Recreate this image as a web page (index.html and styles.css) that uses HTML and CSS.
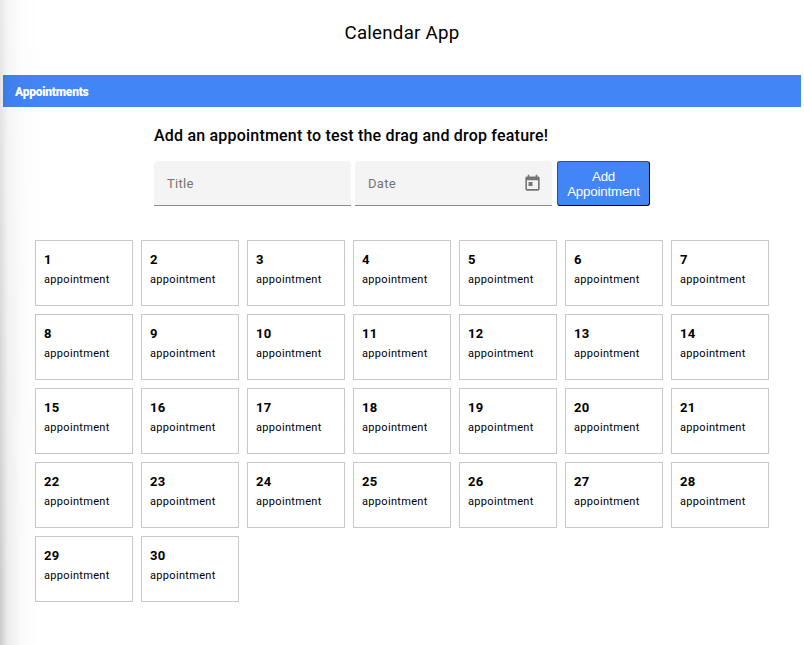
FILE: index.html
```html
<!DOCTYPE html>
<html lang="en">
<head>
<meta charset="utf-8">
<title>Calendar App</title>
<link rel="stylesheet" href="styles.css">
</head>
<body>
<header class="header"><h1>Calendar App</h1></header>
<nav class="toolbar">Appointments</nav>
<main>
<section class="add">
<h2>Add an appointment to test the drag and drop feature!</h2>
<form class="form">
<div class="field"><span>Title</span></div>
<div class="field"><span>Date</span>
<svg class="icon" viewBox="0 0 24 24" fill="currentColor"><path d="M19 3h-1V1h-2v2H8V1H6v2H5c-1.11 0-1.99.9-1.99 2L3 19c0 1.100.89 2 2 2h14c1.100 0 2-.9 2-2V5c0-1.100-.9-2-2-2zm0 16H5V8h14v11zM7 10h5v5H7z"/></svg></div>
<button class="submit" type="button">Add Appointment</button>
</form>
</section>
<section class="calendar">
<article class="day"><b>1</b><p>appointment</p></article>
<article class="day"><b>2</b><p>appointment</p></article>
<article class="day"><b>3</b><p>appointment</p></article>
<article class="day"><b>4</b><p>appointment</p></article>
<article class="day"><b>5</b><p>appointment</p></article>
<article class="day"><b>6</b><p>appointment</p></article>
<article class="day"><b>7</b><p>appointment</p></article>
<article class="day"><b>8</b><p>appointment</p></article>
<article class="day"><b>9</b><p>appointment</p></article>
<article class="day"><b>10</b><p>appointment</p></article>
<article class="day"><b>11</b><p>appointment</p></article>
<article class="day"><b>12</b><p>appointment</p></article>
<article class="day"><b>13</b><p>appointment</p></article>
<article class="day"><b>14</b><p>appointment</p></article>
<article class="day"><b>15</b><p>appointment</p></article>
<article class="day"><b>16</b><p>appointment</p></article>
<article class="day"><b>17</b><p>appointment</p></article>
<article class="day"><b>18</b><p>appointment</p></article>
<article class="day"><b>19</b><p>appointment</p></article>
<article class="day"><b>20</b><p>appointment</p></article>
<article class="day"><b>21</b><p>appointment</p></article>
<article class="day"><b>22</b><p>appointment</p></article>
<article class="day"><b>23</b><p>appointment</p></article>
<article class="day"><b>24</b><p>appointment</p></article>
<article class="day"><b>25</b><p>appointment</p></article>
<article class="day"><b>26</b><p>appointment</p></article>
<article class="day"><b>27</b><p>appointment</p></article>
<article class="day"><b>28</b><p>appointment</p></article>
<article class="day"><b>29</b><p>appointment</p></article>
<article class="day"><b>30</b><p>appointment</p></article>
</section>
</main>
<div class="edge-shadow"></div>
</body>
</html>
```
FILE: styles.css
```css
* { box-sizing: border-box; }
body {
  margin: 0;
  height: 645px;
  overflow: hidden;
  background: #fff;
  color: #000;
  font-family: Roboto, sans-serif;
}
h1, h2, p { margin: 0; font-weight: 400; }
.header { height: 75px; padding-top: 21px; text-align: center; }
h1 { font-size: 18.72px; line-height: 24px; letter-spacing: 0.25px; }
.toolbar {
  height: 32px;
  margin: 0 3px;
  padding-left: 12px;
  background: #4285f4;
  color: #fff;
  font-size: 12px;
  font-weight: 900;
  letter-spacing: -0.23px;
  line-height: 34px;
}
.add { width: 496px; margin: 0 0 0 154px; padding-top: 19px; }
h2 { font-size: 16px; font-weight: 500; line-height: 20px; letter-spacing: 0.2px; white-space: nowrap; }
.form { display: flex; margin-top: 15px; }
.field {
  display: flex;
  align-items: center;
  justify-content: space-between;
  width: 197px;
  height: 45px;
  margin-right: 4px;
  padding: 0 10px 0 13px;
  border-bottom: 1px solid #8c8c8c;
  border-radius: 4px 4px 0 0;
  background: #f4f4f4;
  color: #757575;
  font-size: 13px;
  letter-spacing: 0.3px;
}
.icon { width: 19px; height: 19px; }
.submit {
  width: 93px;
  height: 45px;
  margin-left: 1px;
  padding: 0;
  border: 1px solid;
  border-color: #4c4c4c #000 #000 #4c4c4c;
  border-radius: 3px;
  background: #4285f4;
  color: #fff;
  font: 13.33px/15px "Liberation Sans", Arial, sans-serif;
  letter-spacing: -0.2px;
}
.calendar {
  display: grid;
  grid-template-columns: repeat(7, 98px);
  grid-auto-rows: 66px;
  gap: 8px;
  margin: 34px 0 0 35px;
}
.day { padding: 10px 8px; border: 1px solid #c8c8c8; background: #fff; }
.day b { display: block; font-size: 13px; line-height: 18px; letter-spacing: 0.2px; }
.day p { margin-top: 3px; font-size: 11px; line-height: 16px; letter-spacing: 0.32px; }
.edge-shadow {
  position: absolute;
  inset: 0 auto 0 0;
  width: 40px;
  background: linear-gradient(90deg, rgba(0,0,0,.2), rgba(0,0,0,.07) 8px, rgba(0,0,0,.022) 20px, transparent);
  -webkit-mask-image: linear-gradient(rgba(0,0,0,.45), #000 90%);
  mask-image: linear-gradient(rgba(0,0,0,.45), #000 90%);
  pointer-events: none;
}
```
